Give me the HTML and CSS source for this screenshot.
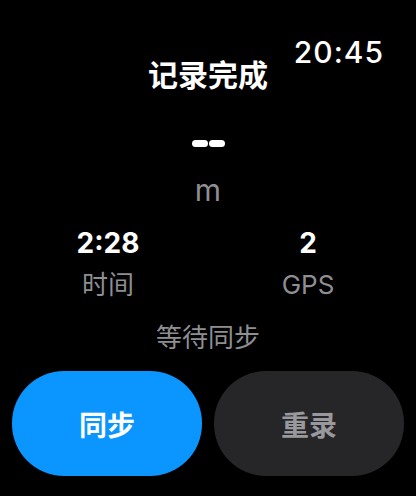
FILE: index.html
```html
<!DOCTYPE html>
<html lang="zh">
<head>
<meta charset="utf-8">
<link rel="stylesheet" href="styles.css">
</head>
<body>
<div class="screen">
  <div class="clock">20:45</div>
  <h1 class="title">记录完成</h1>
  <div class="distance"><span class="dash"></span><span class="dash"></span></div>
  <div class="unit">m</div>
  <div class="stats">
    <div class="stat">
      <div class="stat-value">2:28</div>
      <div class="stat-label">时间</div>
    </div>
    <div class="stat">
      <div class="stat-value">2</div>
      <div class="stat-label">GPS</div>
    </div>
  </div>
  <div class="sync-state">等待同步</div>
  <div class="actions">
    <button class="btn btn-primary">同步</button>
    <button class="btn btn-secondary">重录</button>
  </div>
</div>
</body>
</html>
```

FILE: styles.css
```css
html, body {
  margin: 0;
  padding: 0;
  background: #000;
}
body {
  width: 416px;
  height: 496px;
  overflow: hidden;
  font-family: "Inter", "Noto Sans CJK SC", sans-serif;
  color: #fff;
}
.screen {
  position: relative;
  display: flex;
  flex-direction: column;
  align-items: stretch;
  padding-top: 58px;
}
.clock {
  position: absolute;
  top: 34px;
  right: 32px;
  font-size: 30px;
  line-height: 36px;
  font-weight: 500;
  letter-spacing: 1px;
}
.title {
  margin: 0;
  text-align: center;
  font-family: "Noto Sans CJK SC", sans-serif;
  font-size: 30px;
  line-height: 30px;
  font-weight: 700;
}
.distance {
  margin-top: 52px;
  display: flex;
  justify-content: center;
  gap: 1px;
  height: 7px;
}
.dash {
  width: 16px;
  height: 7px;
  border-radius: 4px;
  background: #fff;
}
.unit {
  margin-top: 28px;
  text-align: center;
  font-size: 30px;
  line-height: 30px;
  color: #8e8e93;
}
.stats {
  margin-top: 24px;
  display: grid;
  grid-template-columns: 1fr 1fr;
  padding: 0 8px;
}
.stat {
  display: flex;
  flex-direction: column;
  align-items: center;
}
.stat-value {
  font-size: 28px;
  line-height: 28px;
  font-weight: 700;
}
.stat-label {
  margin-top: 15px;
  font-size: 26px;
  line-height: 26px;
  color: #8e8e93;
}
.sync-state {
  margin-top: 25px;
  text-align: center;
  font-family: "Noto Sans CJK SC", sans-serif;
  font-size: 26px;
  line-height: 26px;
  color: #8e8e93;
}
.actions {
  margin-top: 22px;
  display: flex;
  gap: 12px;
  padding: 0 12px;
}
.btn {
  flex: 1;
  height: 105px;
  border: none;
  border-radius: 52px;
  font-family: "Noto Sans CJK SC", sans-serif;
  font-size: 28px;
  font-weight: 700;
  padding: 0;
}
.btn-primary {
  background: #0a95ff;
  color: #fff;
}
.btn-secondary {
  background: #262628;
  color: #98989d;
}
```
